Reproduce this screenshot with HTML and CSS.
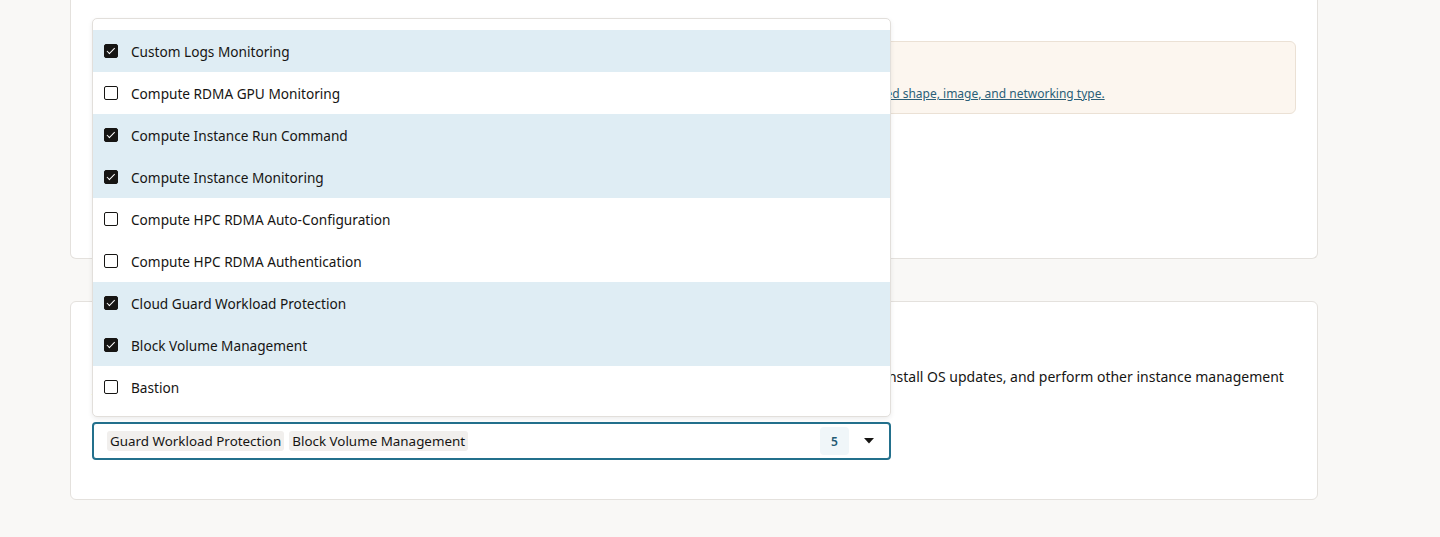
FILE: index.html
```html
<!DOCTYPE html>
<html lang="en">
<head>
<meta charset="utf-8">
<title>Management</title>
<link rel="stylesheet" href="styles.css">
</head>
<body>
<main class="page">
  <section class="card card-cut">
    <div class="notice">
      <p class="notice-title">Plugin availability</p>
      <p class="notice-text"><a href="#" class="link">Some of the Oracle Cloud Agent plugins might not be available for the instance. Review the list of plugins that are supported for the selected shape, image, and networking type.</a></p>
    </div>
  </section>

  <section class="card card-agent">
    <h3 class="card-title">Oracle Cloud Agent</h3>
    <p class="desc">Choose which plugins to enable when the instance is launched. Oracle Cloud Agent plugins collect performance metrics, install OS updates, and perform other instance management tasks.</p>

    <div class="select-wrap">
      <ul class="menu">
        <li class="opt on"><span class="cb"></span>Custom Logs Monitoring</li>
        <li class="opt"><span class="cb"></span>Compute RDMA GPU Monitoring</li>
        <li class="opt on"><span class="cb"></span>Compute Instance Run Command</li>
        <li class="opt on"><span class="cb"></span>Compute Instance Monitoring</li>
        <li class="opt"><span class="cb"></span>Compute HPC RDMA Auto-Configuration</li>
        <li class="opt"><span class="cb"></span>Compute HPC RDMA Authentication</li>
        <li class="opt on"><span class="cb"></span>Cloud Guard Workload Protection</li>
        <li class="opt on"><span class="cb"></span>Block Volume Management</li>
        <li class="opt"><span class="cb"></span>Bastion</li>
      </ul>
      <div class="select">
        <div class="chips">
          <span class="chip">Guard Workload Protection</span>
          <span class="chip">Block Volume Management</span>
        </div>
        <span class="count">5</span>
        <svg class="caret" width="10" height="6" viewBox="0 0 10 6"><path d="M0 0h10L5 5.5z" fill="#161513"/></svg>
      </div>
    </div>
  </section>
</main>
</body>
</html>
```

FILE: styles.css
```css
* { box-sizing: border-box; }

html, body {
  margin: 0;
  height: 100%;
  overflow: hidden;
}

body {
  background: #f9f8f6;
  color: #161513;
  font-family: "Noto Sans", "Open Sans", sans-serif;
  font-size: 14px;
}

.page {
  width: 1248px;
  margin-left: 70px;
  display: flex;
  flex-direction: column;
  gap: 42px;
}

.card {
  background: #fff;
  border: 1px solid #e4e1dd;
  border-radius: 6px;
}

/* first card continues above the fold */
.card-cut {
  border-top: 0;
  border-radius: 0 0 6px 6px;
  height: 259px;
  padding: 41px 21px 0;
}

.card-agent {
  height: 199px;
  padding: 20px 21px 0;
}

.notice {
  background: #fcf6ef;
  border: 1px solid #ebe1d5;
  border-radius: 6px;
  height: 73px;
  padding: 12px 16px;
}

.notice p { margin: 0; }

.notice-title {
  font-weight: 600;
  line-height: 20px;
  font-size: 14px;
}

.notice-text {
  margin-top: 11px !important;
  font-size: 12px;
  line-height: 18px;
}

.link {
  color: #2b5f78;
  text-decoration: underline;
}

.card-title {
  margin: 8px 0 0;
  font-size: 16px;
  font-weight: 600;
  line-height: 24px;
}

.desc {
  margin: 13px 0 0;
  line-height: 20px;
  font-size: 14px;
}

.select-wrap {
  position: relative;
  width: 799px;
  margin-top: 15px;
}

.select {
  height: 38px;
  border: 2px solid #23708c;
  border-radius: 4px;
  display: flex;
  align-items: center;
  padding: 0 15px 0 13px;
}

.chips {
  flex: 1;
  display: flex;
  gap: 5px;
}

.chip {
  background: #f1efed;
  border-radius: 3px;
  padding: 0 3px;
  line-height: 20px;
  font-size: 13.4px;
}

.count {
  background: #f0f6f9;
  color: #245b74;
  border-radius: 4px;
  width: 29px;
  height: 28px;
  display: flex;
  align-items: center;
  justify-content: center;
  font-size: 12px;
  font-weight: 600;
  margin-right: 15px;
}

.caret { display: block; }

.menu {
  position: absolute;
  left: 0;
  right: 0;
  bottom: calc(100% + 5px);
  margin: 0;
  padding: 11px 0 8px;
  list-style: none;
  background: #fff;
  border: 1px solid #e2dfdb;
  border-radius: 5px;
  box-shadow: 0 2px 5px rgba(0, 0, 0, 0.08);
  z-index: 2;
}

.opt {
  height: 42px;
  display: flex;
  align-items: center;
  padding-left: 11px;
  gap: 13px;
  font-size: 13.65px;
}

.opt.on { background: #dfedf4; }

.cb {
  width: 14px;
  height: 14px;
  border: 1.5px solid #161513;
  border-radius: 2px;
  background: #fff;
  flex: none;
  position: relative;
}

.opt.on .cb {
  background: #161513;
}

.opt.on .cb::after {
  content: "";
  position: absolute;
  left: 3.5px;
  top: 1px;
  width: 3px;
  height: 6.5px;
  border: solid #fff;
  border-width: 0 1.5px 1.5px 0;
  transform: rotate(45deg);
}
```
